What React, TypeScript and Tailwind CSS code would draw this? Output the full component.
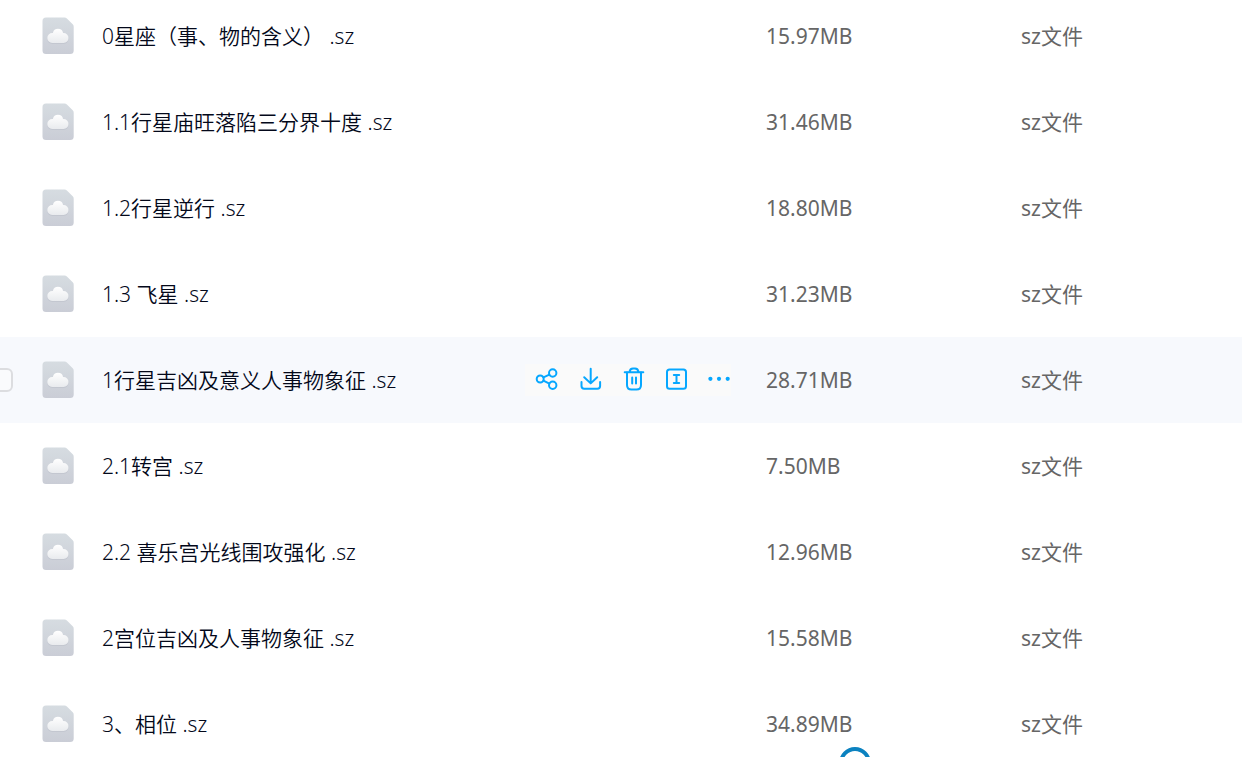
import React from "react";

const files = [
  { name: "0星座（事、物的含义） .sz", size: "15.97MB" },
  { name: "1.1行星庙旺落陷三分界十度 .sz", size: "31.46MB" },
  { name: "1.2行星逆行 .sz", size: "18.80MB" },
  { name: "1.3 飞星 .sz", size: "31.23MB" },
  { name: "1行星吉凶及意义人事物象征 .sz", size: "28.71MB", active: true },
  { name: "2.1转宫 .sz", size: "7.50MB" },
  { name: "2.2 喜乐宫光线围攻强化 .sz", size: "12.96MB" },
  { name: "2宫位吉凶及人事物象征 .sz", size: "15.58MB" },
  { name: "3、相位 .sz", size: "34.89MB" },
];

function FileIcon() {
  return (
    <svg className="h-[38px] w-8 shrink-0" viewBox="0 0 32 38" aria-hidden="true">
      <defs>
        <linearGradient id="sheet" x1="0" y1="0" x2="0" y2="1">
          <stop offset="0" stopColor="#d6dce1" />
          <stop offset="1" stopColor="#cacdd6" />
        </linearGradient>
        <linearGradient id="cloud" x1="0" y1="0" x2="0" y2="1">
          <stop offset="0" stopColor="#ffffff" />
          <stop offset="1" stopColor="#e9ebee" />
        </linearGradient>
      </defs>
      <path
        d="M4 .5h18.5q1.4 0 2.4 1l5.8 5.8q1 1 1 2.4V33.5q0 3.5-3.5 3.5H4Q.5 37 .5 33.5V4Q.5.5 4 .5z"
        fill="url(#sheet)"
      />
      <path
        d="M10.3 27a5 5 0 0 1 0-10h.6a5.2 5.2 0 0 1 10.2 0h.4a5 5 0 0 1 0 10z"
        fill="#b9bdc7"
        opacity=".5"
      />
      <path
        d="M10.3 26a5 5 0 0 1 0-10h.6a5.2 5.2 0 0 1 10.2 0h.4a5 5 0 0 1 0 10z"
        fill="url(#cloud)"
      />
    </svg>
  );
}

function ActionButton({
  label,
  children,
}: {
  label: string;
  children: React.ReactNode;
}) {
  return (
    <button type="button" aria-label={label} className="text-[#06a7ff]">
      <svg
        className="block h-6 w-6"
        viewBox="0 0 24 24"
        fill="none"
        stroke="currentColor"
        strokeWidth="2"
        strokeLinecap="round"
        strokeLinejoin="round"
      >
        {children}
      </svg>
    </button>
  );
}

function Actions() {
  return (
    <div className="mr-[35px] ml-auto flex h-8 items-start gap-[19px] bg-[#fafafa] pt-[3px] pl-[10px]">
      <ActionButton label="分享">
        <circle cx="5.2" cy="12" r="3.5" />
        <circle cx="17.7" cy="6" r="3.7" />
        <circle cx="17.7" cy="18.2" r="3.7" />
        <path d="M8.4 10.4l6-2.8M8.4 13.6l6 3" />
      </ActionButton>
      <ActionButton label="下载">
        <path d="M12.7 1.8v14.4M6.2 10.2l6.5 6.2 6.5-6.2" />
        <path d="M3.5 15v4q0 2.7 2.7 2.7h13.2q2.7 0 2.7-2.7v-4" />
      </ActionButton>
      <ActionButton label="删除">
        <path d="M3.7 5.2h18.6M8.5 5q.5-3.4 3.5-3.4h2q3 0 3.5 3.4" />
        <path d="M6 5.5V18q0 4.5 4.5 4.5h5q4.5 0 4.5-4.5V5.5" />
        <path d="M11.2 10.5v6M15 10.5v6" />
      </ActionButton>
      <ActionButton label="重命名">
        <rect x="3" y="2.5" width="19" height="19.3" rx="2.6" />
        <path d="M9.8 8h5.4M12.5 8v8M9.8 16h5.4" />
      </ActionButton>
      <ActionButton label="更多">
        <g fill="currentColor" stroke="none">
          <circle cx="3.4" cy="11.8" r="2.1" />
          <circle cx="12" cy="11.8" r="2.1" />
          <circle cx="20.7" cy="11.8" r="2.1" />
        </g>
      </ActionButton>
    </div>
  );
}

function FileRow({
  name,
  size,
  active,
}: {
  name: string;
  size: string;
  active?: boolean;
}) {
  return (
    <tr className={active ? "h-[86px] bg-[#f7f9fd]" : "h-[86px]"}>
      <td className="p-0">
        <div className="flex items-center">
          <div className="w-[42px] shrink-0">
            {active && (
              <input
                type="checkbox"
                aria-label={name}
                className="-ml-[11px] block h-6 w-6 appearance-none rounded-md border-2 border-[#dcdde0] bg-[#fafbfd]"
              />
            )}
          </div>
          <FileIcon />
          <span className="ml-7 whitespace-nowrap font-[350] text-[#03081a]">
            {name}
          </span>
          {active && <Actions />}
        </div>
      </td>
      <td className="p-0">{size}</td>
      <td className="p-0">sz文件</td>
    </tr>
  );
}

export default function App() {
  return (
    <main className="relative h-screen overflow-hidden bg-white font-['Noto_Sans','Noto_Sans_CJK_SC',sans-serif] text-[21px] leading-7 text-[#666]">
      <table className="-mt-[7px] w-full table-fixed border-collapse text-left">
        <colgroup>
          <col />
          <col className="w-[255px]" />
          <col className="w-[221px]" />
        </colgroup>
        <tbody>
          {files.map((file) => (
            <FileRow key={file.name} {...file} />
          ))}
        </tbody>
      </table>

      {/* loading ring, mostly below the fold */}
      <div className="absolute -bottom-[22px] left-[839px] h-8 w-8 rounded-full border-4 border-[#0b82c0]" />
    </main>
  );
}
